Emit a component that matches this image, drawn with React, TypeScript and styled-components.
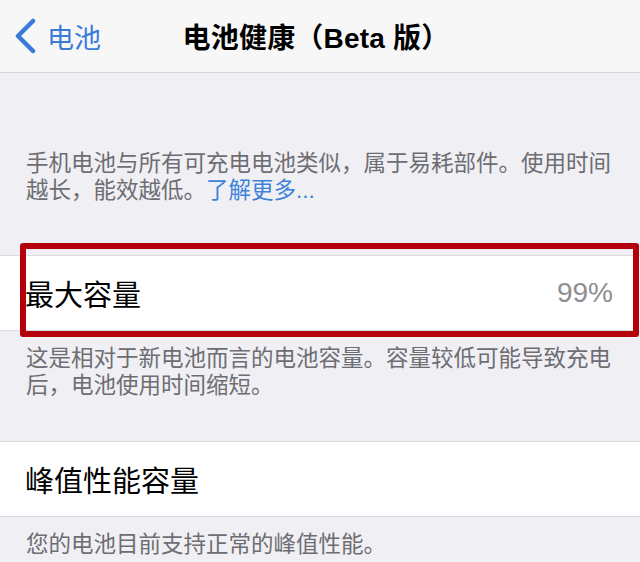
import * as React from 'react'
import styled, { createGlobalStyle } from 'styled-components';

const GlobalStyle = createGlobalStyle`
    html, body {
        margin: 0;
        padding: 0;
        background: #efeff4;
    }
    body {
        font-family: "Liberation Sans", "Noto Sans CJK SC", sans-serif;
        -webkit-font-smoothing: antialiased;
    }
`;

const Screen = styled.div`
    width: 640px;
    height: 562px;
    overflow: hidden;
    background: #efeff4;
`;

const NavBar = styled.div`
    position: relative;
    height: 72px;
    display: flex;
    align-items: center;
    justify-content: center;
    background: #f7f7f8;
    border-bottom: 1px solid #d6d6da;
    padding-right: 8px;
`;

const BackButton = styled.div`
    position: absolute;
    left: 14px;
    top: 0;
    bottom: 0;
    display: flex;
    align-items: center;
    gap: 11px;
    color: #3a7bd8;
    font-size: 27px;
`;

const Title = styled.div`
    font-size: 28px;
    font-weight: 700;
    color: #000;
    letter-spacing: 0.2px;
`;

const Note = styled.div<{ $top: number; $bottom: number }>`
    padding: ${p => p.$top}px 20px ${p => p.$bottom}px 26px;
    font-size: 22.5px;
    line-height: 27px;
    color: #6d6d72;
`;

const Link = styled.span`
    color: #3d82da;
`;

const CellWrap = styled.div`
    position: relative;
`;

const Cell = styled.div`
    height: 74px;
    display: flex;
    align-items: center;
    justify-content: space-between;
    padding: 0 27px 0 25px;
    background: #fff;
    border-top: 1px solid #dcdce0;
    border-bottom: 1px solid #dcdce0;
`;

const CellLabel = styled.div`
    font-size: 29px;
    color: #000;
`;

const CellValue = styled.div`
    font-size: 28px;
    color: #8e8e93;
`;

const Highlight = styled.div`
    position: absolute;
    left: 20px;
    right: 1px;
    top: -12px;
    bottom: -6px;
    border: 6px solid #b4000d;
    border-radius: 3px;
`;

const Chevron = () => (
    <svg width="22" height="36" viewBox="0 0 22 36">
        <path d="M19 3 L4 18 L19 33" fill="none" stroke="#3a7bd8" strokeWidth="4.5"
            strokeLinecap="round" strokeLinejoin="round" />
    </svg>
);

export default function App() {
    return (
        <Screen>
            <GlobalStyle />
            <NavBar>
                <BackButton>
                    <Chevron />
                    <span>电池</span>
                </BackButton>
                <Title>电池健康（Beta 版）</Title>
            </NavBar>

            <Note $top={77} $bottom={51}>
                手机电池与所有可充电电池类似，属于易耗部件。使用时间越长，能效越低。<Link>了解更多...</Link>
            </Note>

            <CellWrap>
                <Cell>
                    <CellLabel>最大容量</CellLabel>
                    <CellValue>99%</CellValue>
                </Cell>
                <Highlight />
            </CellWrap>

            <Note $top={14} $bottom={42}>
                这是相对于新电池而言的电池容量。容量较低可能导致充电后，电池使用时间缩短。
            </Note>

            <CellWrap>
                <Cell>
                    <CellLabel>峰值性能容量</CellLabel>
                </Cell>
            </CellWrap>

            <Note $top={14} $bottom={0}>
                您的电池目前支持正常的峰值性能。
            </Note>
        </Screen>
    )
}
